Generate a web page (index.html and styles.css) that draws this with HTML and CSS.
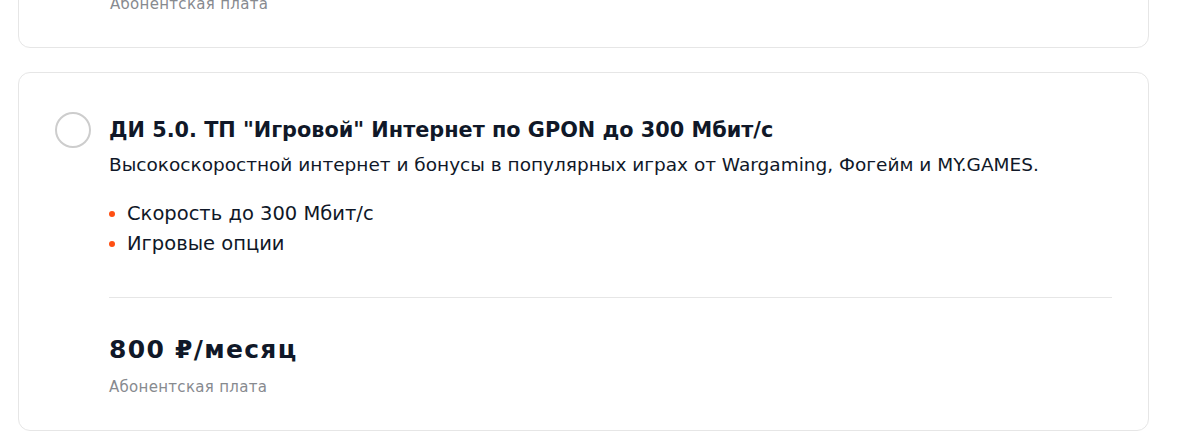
FILE: index.html
```html
<!DOCTYPE html>
<html lang="ru">
<head>
  <meta charset="UTF-8">
  <link rel="stylesheet" href="styles.css">
  <title>Тарифы</title>
</head>
<body>
  <div class="tariffs">
    <div class="tariff tariff_prev">
      <div class="tariff_price">
        <p class="price_value">650 ₽/месяц</p>
        <p class="price_label">Абонентская плата</p>
      </div>
    </div>

    <div class="tariff">
      <div class="tariff_head">
        <span class="tariff_radio"></span>
        <div class="tariff_body">
          <p class="tariff_title">ДИ 5.0. ТП "Игровой" Интернет по GPON до 300 Мбит/с</p>
          <p class="tariff_description">Высокоскоростной интернет и бонусы в популярных играх от Wargaming, Фогейм и MY.GAMES.</p>
          <ul class="tariff_features">
            <li>Скорость до 300 Мбит/с</li>
            <li>Игровые опции</li>
          </ul>
          <div class="tariff_price">
            <p class="price_value">800 ₽/месяц</p>
            <p class="price_label">Абонентская плата</p>
          </div>
        </div>
      </div>
    </div>
  </div>
</body>
</html>
```

FILE: styles.css
```css
/* Basics */
body {
  margin: 0;
  background-color: #ffffff;
  font-family: "DejaVu Sans", sans-serif;
  color: #101828;
}

p {
  margin: 0;
}

/* List */
.tariffs {
  display: flex;
  flex-direction: column;
  gap: 24px;
  width: 1131px;
  margin: -89px 0 0 18px;
}

.tariff {
  border: 1px solid #e6e6e6;
  border-radius: 12px;
  padding: 39px 36px 33px;
}

.tariff_prev {
  padding-left: 91px;
}

.tariff_head {
  display: flex;
  gap: 18px;
}

.tariff_radio {
  flex: none;
  width: 32px;
  height: 32px;
  border: 2px solid #cdcdcd;
  border-radius: 50%;
}

.tariff_body {
  flex: 1;
}

.tariff_title {
  font-size: 20.8px;
  font-weight: 700;
  line-height: 36px;
}

.tariff_description {
  margin-top: 3px;
  font-size: 18.5px;
  line-height: 28px;
}

/* Features */
.tariff_features {
  list-style: none;
  margin: 20px 0 0;
  padding: 0 0 38px;
  border-bottom: 1px solid #e6e6e6;
}

.tariff_features li {
  position: relative;
  padding-left: 18px;
  font-size: 19.5px;
  line-height: 30px;
}

.tariff_features li::before {
  content: "";
  position: absolute;
  left: 0;
  top: 12px;
  width: 6px;
  height: 6px;
  border-radius: 50%;
  background-color: #ff4f12;
}

/* Price */
.tariff_price {
  padding-top: 36px;
}

.tariff_prev .tariff_price {
  padding-top: 0;
}

.price_value {
  font-size: 25px;
  font-weight: 700;
  line-height: 32px;
  letter-spacing: 1.3px;
}

.price_label {
  margin-top: 11px;
  font-size: 15px;
  line-height: 20px;
  letter-spacing: 0.3px;
  color: #878a8f;
}
```
